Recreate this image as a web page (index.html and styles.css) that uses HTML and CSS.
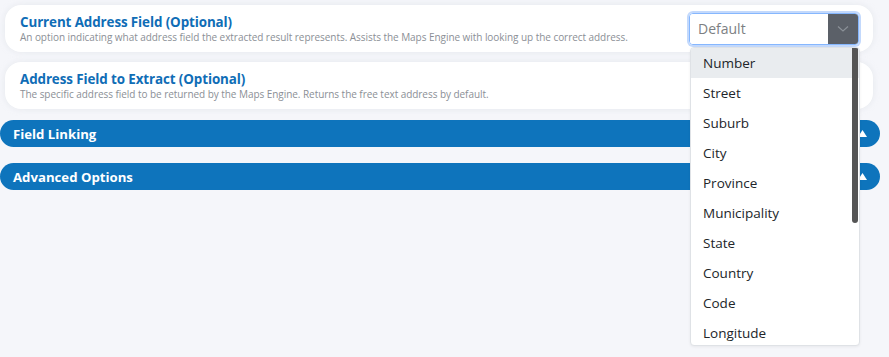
FILE: index.html
```html
<!DOCTYPE html>
<html>
<head>
<meta charset="utf-8">
<link rel="stylesheet" href="styles.css">
</head>
<body>
<div class="page">
  <div class="card">
    <div class="info">
      <div class="title">Current Address Field (Optional)</div>
      <div class="desc">An option indicating what address field the extracted result represents. Assists the Maps Engine with looking up the correct address.</div>
    </div>
    <div class="select">
      <span class="value">Default</span>
      <span class="btn"><svg width="12" height="8" viewBox="0 0 12 8"><path d="M1 1.5 L6 6 L11 1.5" fill="none" stroke="#8a9097" stroke-width="1.2"/></svg></span>
    </div>
  </div>
  <div class="card">
    <div class="info">
      <div class="title">Address Field to Extract (Optional)</div>
      <div class="desc">The specific address field to be returned by the Maps Engine. Returns the free text address by default.</div>
    </div>
  </div>
  <div class="bar"><span>Field Linking</span><svg class="tri" width="9" height="7" viewBox="0 0 9 7"><path d="M4.5 0 L9 7 L0 7 Z" fill="#fff"/></svg></div>
  <div class="bar"><span>Advanced Options</span><svg class="tri" width="9" height="7" viewBox="0 0 9 7"><path d="M4.5 0 L9 7 L0 7 Z" fill="#fff"/></svg></div>
</div>
<div class="menu">
  <div class="item active">Number</div>
  <div class="item">Street</div>
  <div class="item">Suburb</div>
  <div class="item">City</div>
  <div class="item">Province</div>
  <div class="item">Municipality</div>
  <div class="item">State</div>
  <div class="item">Country</div>
  <div class="item">Code</div>
  <div class="item">Longitude</div>
  <div class="scroll"></div>
</div>
</body>
</html>
```

FILE: styles.css
```css
html, body {
  margin: 0;
  padding: 0;
}
body {
  background: #f5f6fa;
  font-family: "Open Sans", "Noto Sans", sans-serif;
  width: 889px;
  height: 357px;
  overflow: hidden;
  position: relative;
}
.page {
  padding-top: 5px;
}
.card {
  height: 47px;
  margin: 0 16px 10px 5px;
  background: #fff;
  border-radius: 16px;
  box-shadow: 0 0 6px rgba(200, 205, 215, 0.35);
  display: flex;
  align-items: center;
  justify-content: space-between;
  padding: 0 14px 0 15px;
  box-sizing: border-box;
}
.card + .card {
  margin-bottom: 11px;
}
.info {
  display: flex;
  flex-direction: column;
  padding-top: 1px;
}
.title {
  color: #0f6db6;
  font-weight: 700;
  font-size: 13.4px;
  line-height: 17px;
  letter-spacing: -0.1px;
}
.desc {
  color: #8b8f96;
  font-size: 10px;
  line-height: 13px;
  letter-spacing: -0.05px;
}
.select {
  width: 168px;
  height: 30px;
  border: 1px solid #86b7fe;
  box-shadow: 0 0 0 2px #c3d9fc;
  border-radius: 4px;
  display: flex;
  align-items: stretch;
  box-sizing: content-box;
  overflow: hidden;
  margin-top: 1px;
}
.value {
  flex: 1;
  background: #fff;
  color: #7d7f83;
  font-size: 14px;
  line-height: 30px;
  padding-left: 8px;
}
.btn {
  width: 30px;
  background: #5b6068;
  display: flex;
  align-items: center;
  justify-content: center;
}
.bar {
  height: 27px;
  margin: 0 9px 16px 0;
  background: #0e74bc;
  border-radius: 14px;
  display: flex;
  align-items: center;
  justify-content: space-between;
  padding: 0 13px 0 13px;
  color: #fff;
  font-weight: 700;
  font-size: 13.2px;
}
.tri {
  margin-top: -1px;
}
.menu {
  position: absolute;
  left: 690px;
  top: 47px;
  width: 170px;
  height: 299px;
  background: #fff;
  border: 1px solid #dfe2e6;
  border-radius: 4px;
  box-sizing: border-box;
  overflow: hidden;
  box-shadow: 0 1px 3px rgba(0, 0, 0, 0.06);
}
.item {
  height: 30px;
  line-height: 30px;
  padding-left: 12px;
  font-size: 13.5px;
  color: #212529;
}
.item.active {
  background: #e9ecef;
}
.scroll {
  position: absolute;
  right: 1px;
  top: 0;
  width: 6px;
  height: 175px;
  background: #555;
  border-radius: 0 0 3px 3px;
}
```
